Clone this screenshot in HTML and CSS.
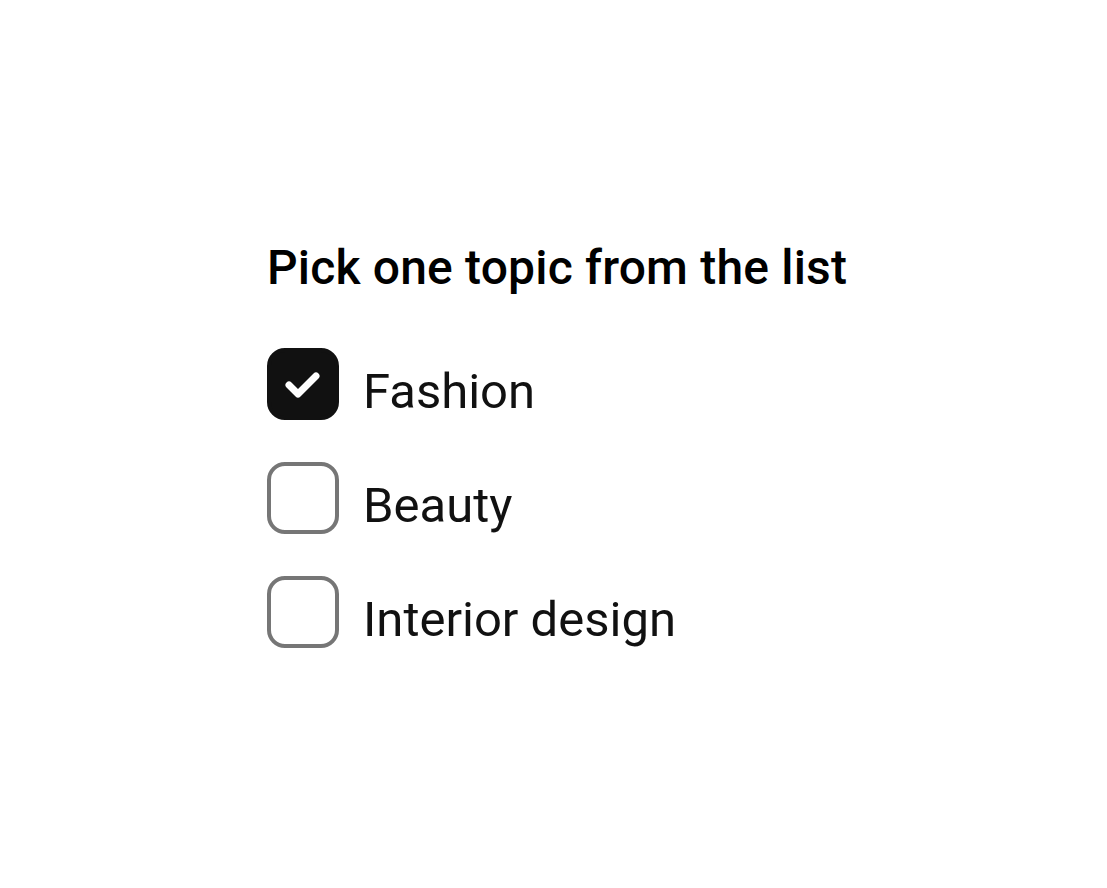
FILE: index.html
```html
<!DOCTYPE html>
<html>
<head>
<meta charset="utf-8">
<link rel="stylesheet" href="styles.css">
</head>
<body>
<div class="page">
  <fieldset class="group">
    <legend class="title">Pick one topic from the list</legend>
    <label class="option">
      <span class="box checked">
        <svg viewBox="0 0 72 72" width="72" height="72"><path d="M22 37 L31 46 L49 28" fill="none" stroke="#fff" stroke-width="7" stroke-linecap="round" stroke-linejoin="round"/></svg>
      </span>
      <span class="text">Fashion</span>
    </label>
    <label class="option">
      <span class="box"></span>
      <span class="text">Beauty</span>
    </label>
    <label class="option">
      <span class="box"></span>
      <span class="text">Interior design</span>
    </label>
  </fieldset>
</div>
</body>
</html>
```
FILE: styles.css
```css
html, body { margin: 0; padding: 0; background: #fff; }
body { font-family: Roboto, "Noto Sans", sans-serif; }
.page { padding: 242px 0 0 267px; }
.group { border: 0; margin: 0; padding: 0; display: flex; flex-direction: column; gap: 42px; }
.title { padding: 0; font-size: 48px; font-weight: 500; color: #000; line-height: 52px; margin-bottom: 54px; letter-spacing: 0.18px; }
.option { display: flex; align-items: center; gap: 24px; }
.box { width: 72px; height: 72px; box-sizing: border-box; border: 4px solid #767676; border-radius: 18px; flex: none; display: block; }
.box.checked { background: #111; border-color: #111; position: relative; }
.box.checked svg { position: absolute; left: -4px; top: -4px; }
.text { font-size: 49px; color: #111; line-height: 56px; padding-top: 16px; }
```
